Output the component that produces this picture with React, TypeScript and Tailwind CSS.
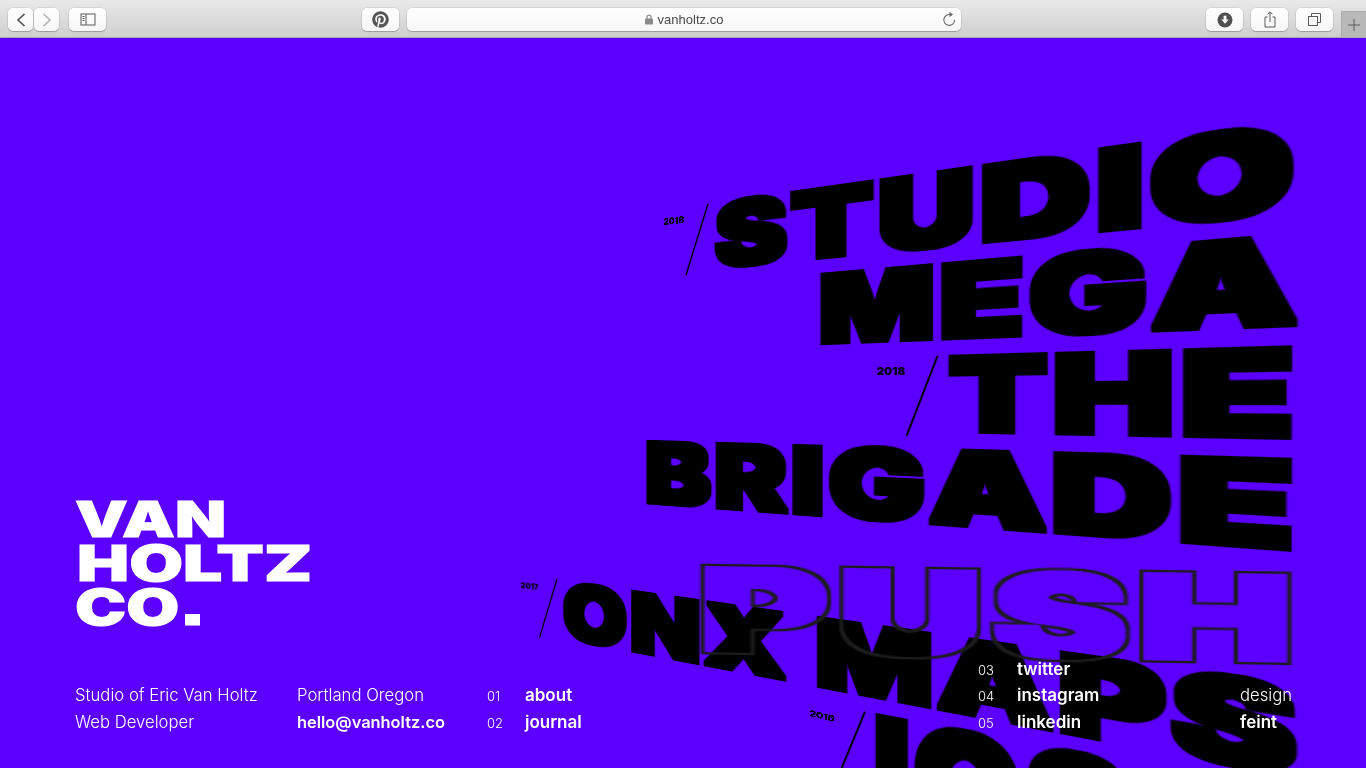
import React, { useLayoutEffect, useState } from "react";
import { FaPinterest } from "react-icons/fa";

type P = [number, number];

function quadMatrix(sx: number, sy: number, sw: number, sh: number, q: [P, P, P, P]) {
  const [[x0, y0], [x1, y1], [x2, y2], [x3, y3]] = q;
  const dx1 = x1 - x2, dx2 = x3 - x2, ax = x0 - x1 + x2 - x3;
  const dy1 = y1 - y2, dy2 = y3 - y2, ay = y0 - y1 + y2 - y3;
  const den = dx1 * dy2 - dx2 * dy1;
  const g = (ax * dy2 - dx2 * ay) / den;
  const h = (dx1 * ay - ax * dy1) / den;
  const a = x1 - x0 + g * x1, b = x3 - x0 + h * x3, c = x0;
  const d = y1 - y0 + g * y1, e = y3 - y0 + h * y3, f = y0;
  const A = a / sw, B = b / sh, C = c - (a * sx) / sw - (b * sy) / sh;
  const D = d / sw, E = e / sh, F = f - (d * sx) / sw - (e * sy) / sh;
  const G = g / sw, H = h / sh, I = 1 - (g * sx) / sw - (h * sy) / sh;
  return `matrix3d(${A},${D},0,${G},${B},${E},0,${H},0,0,1,0,${C},${F},0,${I})`;
}

const OFFSET = 38;

function Warp({ text, q, padX = 0, padY = 0, ls = 0, className }: { text: string; q: [P, P, P, P]; padX?: number; padY?: number; ls?: number; className: string }) {
  const [m, setM] = useState<string | undefined>(undefined);
  useLayoutEffect(() => {
    const ctx = document.createElement("canvas").getContext("2d")! as CanvasRenderingContext2D & { letterSpacing: string; fontKerning: string };
    ctx.font = "900 100px Inter";
    ctx.letterSpacing = `${ls}px`;
    ctx.fontKerning = "none";
    const t = ctx.measureText(text);
    const capH = ctx.measureText("H").actualBoundingBoxAscent;
    const baseline = (100 - (t.fontBoundingBoxAscent + t.fontBoundingBoxDescent)) / 2 + t.fontBoundingBoxAscent;
    const left = -t.actualBoundingBoxLeft - padX;
    const right = t.actualBoundingBoxRight + padX;
    const top = baseline - capH - padY;
    const bottom = baseline + padY;
    const qq = q.map(([x, y]) => [x, y - OFFSET]) as [P, P, P, P];
    setM(quadMatrix(left, top, right - left, bottom - top, qq));
  }, [text]);
  return (
    <span
      className={`absolute left-0 top-0 origin-top-left whitespace-nowrap text-[100px] leading-[100px] font-black [font-kerning:none] [font-family:Inter,sans-serif] ${className}`}
      style={{ transform: m, visibility: m ? "visible" : "hidden" }}
    >
      {text}
    </span>
  );
}

const btn =
  "h-[23px] rounded-[5px] bg-linear-to-b from-white to-[#f6f6f6] shadow-[0_0_0_0.5px_rgba(0,0,0,0.12),0_1px_1px_rgba(0,0,0,0.22)] flex items-center justify-center";

function Toolbar() {
  return (
    <div className="relative z-20 h-[38px] shrink-0 flex items-start pt-[8px] pl-[8px] bg-linear-to-b from-[#e9e9e9] to-[#cfcfcf] border-b border-[#a9a9a9] [font-family:'Liberation_Sans',sans-serif]">
      <div className={`${btn} w-[25px]`}>
        <svg width="12" height="16" viewBox="0 0 12 16" fill="none" stroke="#4f4f4f" strokeWidth="1.6"><path d="M9.5 2 L3 8 L9.5 14" /></svg>
      </div>
      <div className={`${btn} w-[25px] ml-[1px]`}>
        <svg width="12" height="16" viewBox="0 0 12 16" fill="none" stroke="#b0b0b0" strokeWidth="1.6"><path d="M2.5 2 L9 8 L2.5 14" /></svg>
      </div>
      <div className={`${btn} w-[37px] ml-[10px]`}>
        <svg width="16" height="13" viewBox="0 0 16 13" fill="none" stroke="#5a5a5a" strokeWidth="1"><rect x="1" y="1" width="14" height="11" /><path d="M6 1 V12" /><path d="M2.5 3.5 H4.5 M2.5 5.5 H4.5 M2.5 7.5 H4.5" /></svg>
      </div>
      <div className={`${btn} w-[37px] ml-[256px]`}>
        <FaPinterest size={17} color="#555555" />
      </div>
      <div className={`${btn} w-[554px] ml-[8px] relative`}>
        <svg className="mr-[5px]" width="8" height="11" viewBox="0 0 8 11" fill="none"><path d="M2 5 V3.2 a2 2 0 0 1 4 0 V5" stroke="#8a8a8a" strokeWidth="1.2" /><rect x="0" y="4.6" width="8" height="6" rx="1" fill="#8a8a8a" /></svg>
        <span className="text-[13px] leading-none text-[#4a4a4a]">vanholtz.co</span>
        <svg className="absolute right-[5px] top-[3px]" width="14" height="16" viewBox="0 0 14 16" fill="none" stroke="#6a6a6a" strokeWidth="1.1"><path d="M8.5 3.7 A5.4 5.4 0 1 0 12.6 8.8" /><path d="M7.5 0.8 L11 3.5 L7.5 6.2 Z" fill="#6a6a6a" stroke="none" /></svg>
      </div>
      <div className={`${btn} w-[37px] ml-[245px]`}>
        <svg width="16" height="16" viewBox="0 0 16 16"><circle cx="8" cy="8" r="7.5" fill="#505050" /><path d="M6.6 3.8 H9.4 V7.6 H11.6 L8 11.8 L4.4 7.6 H6.6 Z" fill="#ffffff" /></svg>
      </div>
      <div className={`${btn} w-[37px] ml-[8px]`}>
        <svg width="12" height="17" viewBox="0 0 12 17" fill="none" stroke="#5a5a5a" strokeWidth="1"><path d="M3.5 6 H1 V16 H11 V6 H8.5" /><path d="M6 11 V1 M3.6 3.2 L6 0.8 L8.4 3.2" /></svg>
      </div>
      <div className={`${btn} w-[37px] ml-[8px]`}>
        <svg width="13" height="13" viewBox="0 0 13 13" fill="none" stroke="#5a5a5a" strokeWidth="1"><rect x="0.5" y="3.5" width="9" height="9" /><path d="M3.5 3.5 V0.5 H12.5 V9.5 H9.5" /></svg>
      </div>
      <div className="absolute right-0 bottom-0 w-[25px] h-[26px] bg-[#b9b9b9] border-l border-t border-[#ababab] flex items-center justify-center">
        <svg width="12" height="12" viewBox="0 0 12 12" stroke="#5a5a5a" strokeWidth="1"><path d="M6 0 V12 M0 6 H12" /></svg>
      </div>
    </div>
  );
}

function Col({ items, className }: { items: string[]; className: string }) {
  return (
    <div className={`flex flex-col ${className}`}>
      {items.map((t) => (
        <div key={t} className="h-[26.5px] leading-[26.5px] whitespace-nowrap">{t}</div>
      ))}
    </div>
  );
}

const solid = "text-black tracking-[3px] [filter:url(#fat-solid)]";
const year = "text-black";

export default function App() {
  return (
    <div className="h-screen w-screen overflow-hidden flex flex-col bg-[#5b00ff] [font-family:Inter,sans-serif]">
      <Toolbar />
      <main className="relative flex-1 overflow-hidden flex flex-col justify-end pl-[75px] pb-[33px] bg-[#5b00ff] text-white">
        <svg className="absolute w-0 h-0">
          <filter id="fat-solid" x="-5%" y="-10%" width="110%" height="120%">
            <feMorphology in="SourceGraphic" operator="dilate" radius="2.7 3.3" />
          </filter>
          <filter id="fat-outline" x="-5%" y="-10%" width="110%" height="120%">
            <feMorphology in="SourceAlpha" operator="dilate" radius="3.6 4.2" result="outer" />
            <feMorphology in="SourceAlpha" operator="dilate" radius="1.8 2.2" result="inner" />
            <feComposite in="outer" in2="inner" operator="out" result="ring" />
            <feFlood floodColor="#1c1c1c" />
            <feComposite in2="ring" operator="in" />
          </filter>
        </svg>
        <Warp text="STUDIO" padX={2.7} padY={3.3} ls={3} className={solid} q={[[714, 202], [1295, 120], [1295, 215.5], [714, 270.5]]} />
        <Warp text="MEGA" padX={2.7} padY={3.3} ls={3} className={solid} q={[[820, 273], [1299, 232], [1299, 328], [820, 346]]} />
        <Warp text="THE" padX={2.7} padY={3.3} ls={3} className={solid} q={[[948, 355], [1293, 345.5], [1293, 441], [948, 434]]} />
        <Warp text="BRIGADE" padX={2.7} padY={3.3} ls={3} className={solid} q={[[646, 440], [1293, 458], [1293, 553], [646, 505]]} />
        <Warp text="ONX MAPS" padX={2.7} padY={3.3} ls={3} className={solid} q={[[563, 580], [1297, 684], [1297, 780], [563, 640]]} />
        <Warp text="IOS" padX={2.7} padY={3.3} ls={3} className={solid} q={[[875, 713], [1130, 762], [1130, 880], [875, 815]]} />
        <Warp text="PUSH" padX={3.6} padY={4.2} ls={5} className="text-black tracking-[5px] [filter:url(#fat-outline)]" q={[[700, 564], [1292, 572], [1292, 666], [700, 655]]} />
        <Warp text="2018" className={year} q={[[664, 218.5], [684, 216], [684, 223], [664, 225]]} />
        <Warp text="2018" className={year} q={[[877, 367], [905, 367], [905, 375], [877, 375]]} />
        <Warp text="2017" className={year} q={[[521, 582], [538, 584], [538, 590], [521, 588]]} />
        <Warp text="2016" className={year} q={[[810, 710], [835, 716], [834, 722], [810, 716]]} />
        <svg className="absolute left-0 top-0" width="1366" height="730" viewBox="0 38 1366 730" stroke="#000" fill="none">
          <path d="M708 204 L686 275" strokeWidth="1.4" />
          <path d="M937.5 356 L906.7 435.7" strokeWidth="2" />
          <path d="M557 579 L539.6 637.3" strokeWidth="1.2" />
          <path d="M865 711.7 L841.7 768" strokeWidth="2" />
        </svg>

        <div className="relative z-10 mb-[27px] font-black text-[50px] leading-[44px] [-webkit-text-stroke:1px_#fff]">
          <div className="origin-left scale-x-[1.33]">VAN</div>
          <div className="origin-left scale-x-[1.39] ml-[2px]">HOLTZ</div>
          <div className="origin-left scale-x-[1.37]">CO<span className="[font-family:'Liberation_Sans',sans-serif] font-bold text-[70px] leading-[0]">.</span></div>
        </div>

        <div className="relative z-10 flex items-end text-[17px]">
          <Col className="w-[222px] font-light text-[16.7px]" items={["Studio of Eric Van Holtz", "Web Developer"]} />
          <div className="w-[190px] flex flex-col">
            <div className="h-[26.5px] leading-[26.5px] font-light text-[16.7px]">Portland Oregon</div>
            <div className="h-[26.5px] leading-[26.5px] font-semibold text-[16.4px]">hello@vanholtz.co</div>
          </div>
          <Col className="w-[38px] font-light text-[13px] translate-y-[1px]" items={["01", "02"]} />
          <Col className="w-[453px] font-semibold" items={["about", "journal"]} />
          <Col className="w-[39px] font-light text-[13px] translate-y-[1px]" items={["03", "04", "05"]} />
          <Col className="w-[223px] font-semibold" items={["twitter", "instagram", "linkedin"]} />
          <div className="flex flex-col">
            <div className="h-[26.5px] leading-[26.5px] font-light text-[16.7px]">design</div>
            <div className="h-[26.5px] leading-[26.5px] font-semibold">feint</div>
          </div>
        </div>
      </main>
    </div>
  );
}
